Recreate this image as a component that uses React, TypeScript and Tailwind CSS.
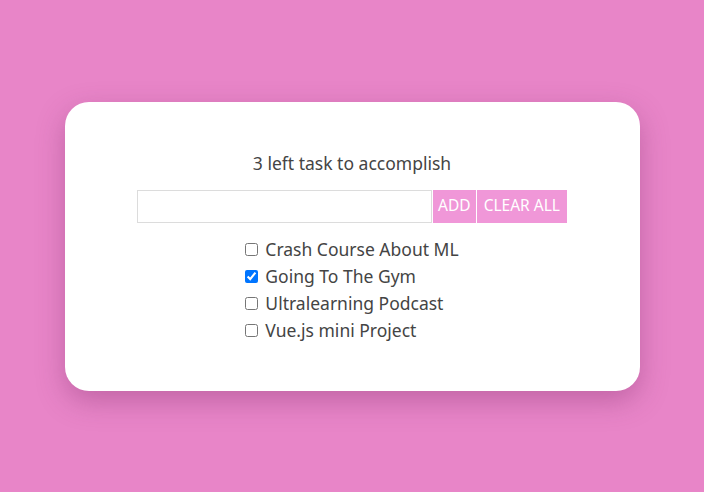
import { useState } from "react"

const initial = [
    { id: 1, title: "Crash Course About ML", done: false },
    { id: 2, title: "Going To The Gym", done: true },
    { id: 3, title: "Ultralearning Podcast", done: false },
    { id: 4, title: "Vue.js mini Project", done: false },
]

function App() {
    const [tasks, setTasks] = useState(initial)
    const [text, setText] = useState("")

    const left = tasks.filter((t) => !t.done).length

    const add = () => {
        if (!text.trim()) return
        setTasks([...tasks, { id: Date.now(), title: text.trim(), done: false }])
        setText("")
    }

    const toggle = (id: number) =>
        setTasks(tasks.map((t) => (t.id === id ? { ...t, done: !t.done } : t)))

    return (
        <div className="min-h-screen w-full bg-[#e885c8] flex items-center justify-center font-['Noto_Sans',sans-serif] text-[#444]">
            <div className="w-[575px] bg-white rounded-[24px] shadow-[0_10px_28px_rgba(120,40,100,0.35)] pt-12 pb-[47px] flex flex-col items-center">
                <p className="text-[17.5px] leading-[27px]">{left} left task to accomplish</p>

                <div className="flex mt-[13px]">
                    <input
                        value={text}
                        onChange={(e) => setText(e.target.value)}
                        className="w-[295px] h-[33px] border border-[#dcdcdc] outline-none px-2"
                    />
                    <button
                        onClick={add}
                        className="h-[33px] ml-[1px] px-[5px] bg-[#f097d8] text-white text-[15.5px]"
                    >
                        ADD
                    </button>
                    <button
                        onClick={() => setTasks([])}
                        className="h-[33px] ml-[1px] px-[7px] bg-[#f097d8] text-white text-[15.5px]"
                    >
                        CLEAR ALL
                    </button>
                </div>

                <ul className="mt-[13px] flex flex-col">
                    {tasks.map((t) => (
                        <li key={t.id} className="flex items-center gap-[7px] text-[17.5px] leading-[27px]">
                            <input
                                type="checkbox"
                                checked={t.done}
                                onChange={() => toggle(t.id)}
                                className="w-[13px] h-[13px] m-0"
                            />
                            <span>{t.title}</span>
                        </li>
                    ))}
                </ul>
            </div>
        </div>
    )
}

export default App
